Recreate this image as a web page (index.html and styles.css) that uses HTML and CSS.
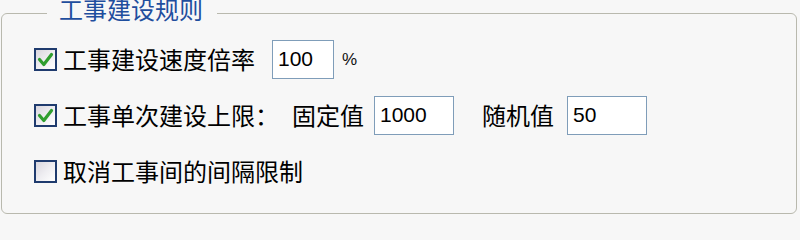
FILE: index.html
```html
<!DOCTYPE html>
<html lang="zh-CN">
<head>
<meta charset="utf-8">
<title>工事建设规则</title>
<link rel="stylesheet" href="styles.css">
</head>
<body>
<fieldset class="group">
  <legend class="group-title">工事建设规则</legend>
  <div class="rows">
    <div class="row">
      <span class="check checked">
        <svg viewBox="0 0 23 23" width="23" height="23"><path d="M5.5 11.5 L9.8 16.5 L17.5 6.5" fill="none" stroke="#2f9e2f" stroke-width="3.2" stroke-linecap="round" stroke-linejoin="round"/></svg>
      </span>
      <span class="label">工事建设速度倍率</span>
      <span class="field w62 gap-l17">100</span>
      <span class="unit">%</span>
    </div>
    <div class="row">
      <span class="check checked">
        <svg viewBox="0 0 23 23" width="23" height="23"><path d="M5.5 11.5 L9.8 16.5 L17.5 6.5" fill="none" stroke="#2f9e2f" stroke-width="3.2" stroke-linecap="round" stroke-linejoin="round"/></svg>
      </span>
      <span class="label">工事单次建设上限：</span>
      <span class="label sub">固定值</span>
      <span class="field w80 gap-l10">1000</span>
      <span class="label sub2">随机值</span>
      <span class="field w80 gap-l13">50</span>
    </div>
    <div class="row">
      <span class="check"></span>
      <span class="label">取消工事间的间隔限制</span>
    </div>
  </div>
</fieldset>
</body>
</html>
```
FILE: styles.css
```css
html, body {
  margin: 0;
  padding: 0;
  background: #f7f7f7;
  width: 800px;
  height: 216px;
  overflow: hidden;
}

.group {
  margin: 0 3px 0 1px;
  padding: 13px 0 0 32px;
  border: 1px solid #b9b9ae;
  border-radius: 6px;
  height: 214px;
  box-sizing: border-box;
}

.group-title {
  margin-left: 13px;
  padding: 0 14px 8px 12px;
  font-family: "Noto Sans CJK SC", "Noto Sans", sans-serif;
  font-size: 24px;
  line-height: 18px;
  color: #1f4e9e;
}

.rows {
  display: flex;
  flex-direction: column;
  gap: 16px;
}

.row {
  height: 40px;
  display: flex;
  align-items: center;
  font-family: "Noto Sans CJK SC", "Noto Sans", sans-serif;
  font-size: 24px;
  color: #000;
}

.check {
  width: 19px;
  height: 19px;
  border: 2px solid #1f3b6e;
  background: linear-gradient(135deg, #d9d6de 0%, #eeedf1 50%, #ffffff 100%);
  position: relative;
  flex: none;
  margin-right: 6px;
}

.check svg {
  position: absolute;
  left: -2px;
  top: -2px;
}

.label {
  line-height: 40px;
  white-space: nowrap;
}

.sub {
  margin-left: 13px;
}

.sub2 {
  margin-left: 28px;
}

.field {
  box-sizing: border-box;
  height: 39px;
  border: 1px solid #7f9db9;
  background: #fff;
  font-family: "Liberation Sans", Arial, sans-serif;
  font-size: 21px;
  color: #000;
  padding-left: 5px;
  display: flex;
  align-items: center;
  flex: none;
}

.w62 { width: 62px; }
.w80 { width: 80px; }
.gap-l17 { margin-left: 17px; }
.gap-l10 { margin-left: 10px; }
.gap-l13 { margin-left: 13px; }

.unit {
  margin-left: 8px;
  font-family: "Liberation Sans", Arial, sans-serif;
  font-size: 17px;
  color: #111;
  line-height: 20px;
  margin-top: 2px;
}
```
